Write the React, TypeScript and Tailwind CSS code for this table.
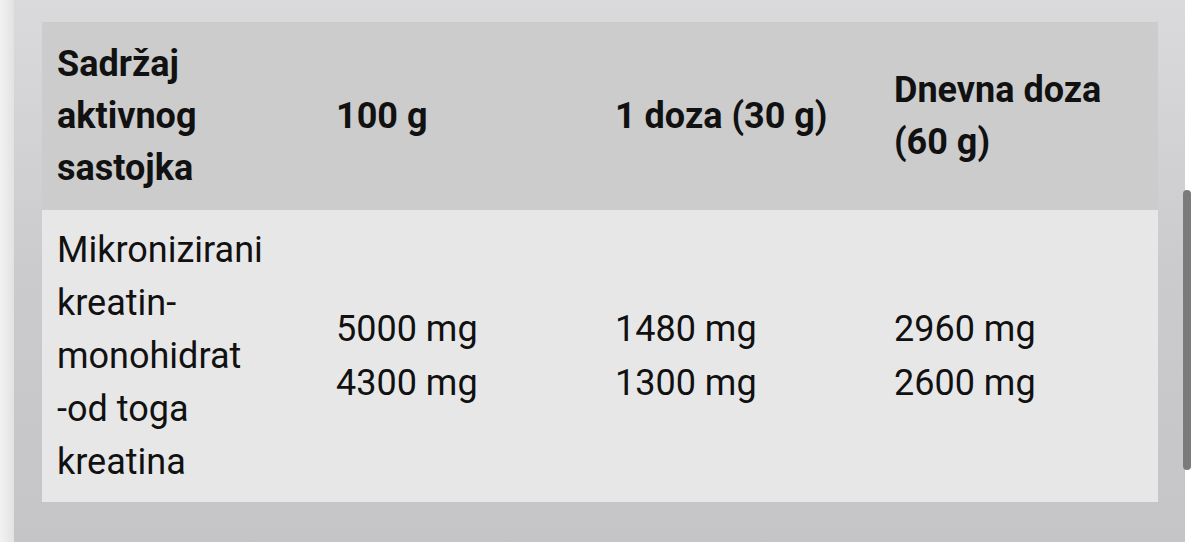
const headers = ['Sadržaj aktivnog sastojka', '100 g', '1 doza (30 g)', 'Dnevna doza (60 g)'];

const App = () => {
    return (
        <div className="w-[1200px] h-[542px] flex bg-white overflow-hidden relative" style={{ fontFamily: 'Roboto, "Noto Sans", sans-serif' }}>
            {/* left edge strip */}
            <div className="w-[14px] h-full bg-gradient-to-r from-[#f2f2f2] to-[#e2e2e4]" />

            {/* gray panel */}
            <div className="w-[1171px] h-full bg-gradient-to-b from-[#dadadc] via-[#cbcbcd] to-[#c5c5c7] pl-[28px] pr-[27px] pt-[22px]">
                <table className="w-[1116px] table-fixed border-collapse text-[#111111]">
                    <thead>
                        <tr className="bg-[#cccccc] h-[188px]">
                            {headers.map((h) => (
                                <th key={h} className="w-1/4 px-[15px] text-left align-middle text-[36px] font-bold leading-[52px]">
                                    {h}
                                </th>
                            ))}
                        </tr>
                    </thead>
                    <tbody>
                        <tr className="bg-[#e7e7e7] h-[292px]">
                            <td className="px-[15px] text-[36px] leading-[53px] align-middle">
                                Mikronizirani<br />kreatin-<br />monohidrat<br />-od toga<br />kreatina
                            </td>
                            <td className="px-[15px] text-[36px] leading-[54px] align-middle">
                                5000 mg<br />4300 mg
                            </td>
                            <td className="px-[15px] text-[36px] leading-[54px] align-middle">
                                1480 mg<br />1300 mg
                            </td>
                            <td className="px-[15px] text-[36px] leading-[54px] align-middle">
                                2960 mg<br />2600 mg
                            </td>
                        </tr>
                    </tbody>
                </table>
            </div>

            {/* scrollbar thumb */}
            <div className="absolute left-[1183px] top-[190px] w-[8px] h-[280px] rounded-full bg-[#7b7b7b]" />
        </div>
    );
};

export default App;
